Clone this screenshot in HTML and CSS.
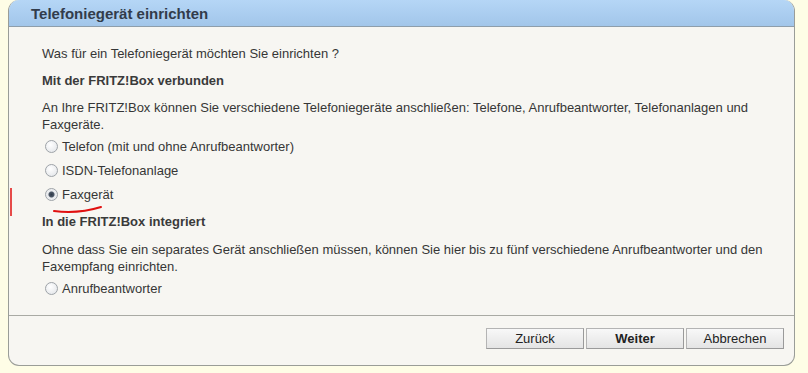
FILE: index.html
```html
<!DOCTYPE html>
<html lang="de">
<head>
    <meta charset="UTF-8">
    <title>Telefoniegerät einrichten</title>
    <link rel="stylesheet" href="styles.css">
</head>
<body>
    <div class="dialog">
        <div class="dialog-head">Telefoniegerät einrichten</div>
        <div class="dialog-body">
            <p class="question">Was für ein Telefoniegerät möchten Sie einrichten ?</p>

            <h4>Mit der FRITZ!Box verbunden</h4>
            <p>An Ihre FRITZ!Box können Sie verschiedene Telefoniegeräte anschließen: Telefone, Anrufbeantworter, Telefonanlagen und Faxgeräte.</p>
            <label class="opt"><input type="radio" name="dev" value="fon"> Telefon (mit und ohne Anrufbeantworter)</label>
            <label class="opt"><input type="radio" name="dev" value="isdn"> ISDN-Telefonanlage</label>
            <label class="opt"><input type="radio" name="dev" value="fax" checked> Faxgerät</label>

            <h4 class="second">In die FRITZ!Box integriert</h4>
            <p>Ohne dass Sie ein separates Gerät anschließen müssen, können Sie hier bis zu fünf verschiedene Anrufbeantworter und den Faxempfang einrichten.</p>
            <label class="opt"><input type="radio" name="dev" value="tam"> Anrufbeantworter</label>
        </div>
        <div class="dialog-foot">
            <button type="button">Zurück</button>
            <button type="button" class="main">Weiter</button>
            <button type="button">Abbrechen</button>
        </div>
    </div>

    <!-- rote Markierung -->
    <svg class="mark" width="130" height="40" viewBox="0 0 130 40">
        <path d="M11 2 L11 30" stroke="#e01010" stroke-width="1.5" fill="none"/>
        <path d="M54 25 C70 27 88 25 101 21" stroke="#e01010" stroke-width="2" fill="none" stroke-linecap="round"/>
    </svg>
</body>
</html>
```

FILE: styles.css
```css
body {
    margin: 0;
    background: #fefde6;
    font-family: "Liberation Sans", Arial, sans-serif;
    font-size: 13px;
    color: #363636;
}

.dialog {
    width: 785px;
    margin-left: 8px;
    border: 1px solid #9a9d98;
    border-top: none;
    border-radius: 11px;
    background: #f7f6f2;
    overflow: hidden;
}

.dialog-head {
    height: 26px;
    line-height: 27px;
    padding-left: 22px;
    background: linear-gradient(to bottom, #b5d6f6, #a2c6ea);
    border-bottom: 1px solid #8e9eab;
    font-size: 15px;
    font-weight: bold;
    color: #323c4b;
}

.dialog-body {
    padding: 18px 14px 15px 33px;
    line-height: 17px;
}

.dialog-body p {
    margin: 0;
}

.question {
    margin-bottom: 10px !important;
}

h4 {
    margin: 0 0 10px 0;
    font-size: 13px;
    line-height: 17px;
    color: #3a3a3a;
}

h4.second {
    margin-top: 7px;
    margin-bottom: 11px;
}

.opt {
    display: flex;
    align-items: center;
    height: 24px;
    margin-left: 3px;
}

.dialog-body p + .opt {
    margin-top: 1px;
}

.opt input {
    appearance: none;
    width: 13px;
    height: 13px;
    margin: 0 4px 0 0;
    border: 1px solid #9ea3a8;
    border-radius: 50%;
    background: radial-gradient(circle at 40% 35%, #ffffff, #dfe2e6);
    box-sizing: border-box;
}

.opt input:checked {
    background: radial-gradient(circle, #2f3a48 0, #4c5766 2.5px, #e7e9ec 3.5px, #f6f7f8);
}

.dialog-foot {
    border-top: 1px solid #a9aaa4;
    height: 50px;
    display: flex;
    justify-content: flex-end;
    align-items: flex-start;
    gap: 2px;
    padding: 12px 10px 0 0;
    box-sizing: border-box;
}

button {
    width: 98px;
    height: 21px;
    padding: 0;
    font-family: "Liberation Sans", Arial, sans-serif;
    font-size: 13px;
    color: #222;
    border: 1px solid #b4b4b4;
    border-bottom-color: #9a9a9a;
    border-right-color: #9a9a9a;
    background: linear-gradient(to bottom, #f8f8f8, #e4e4e4);
    cursor: pointer;
}

button.main {
    font-weight: bold;
}

.mark {
    position: absolute;
    left: 0;
    top: 186px;
}
```
